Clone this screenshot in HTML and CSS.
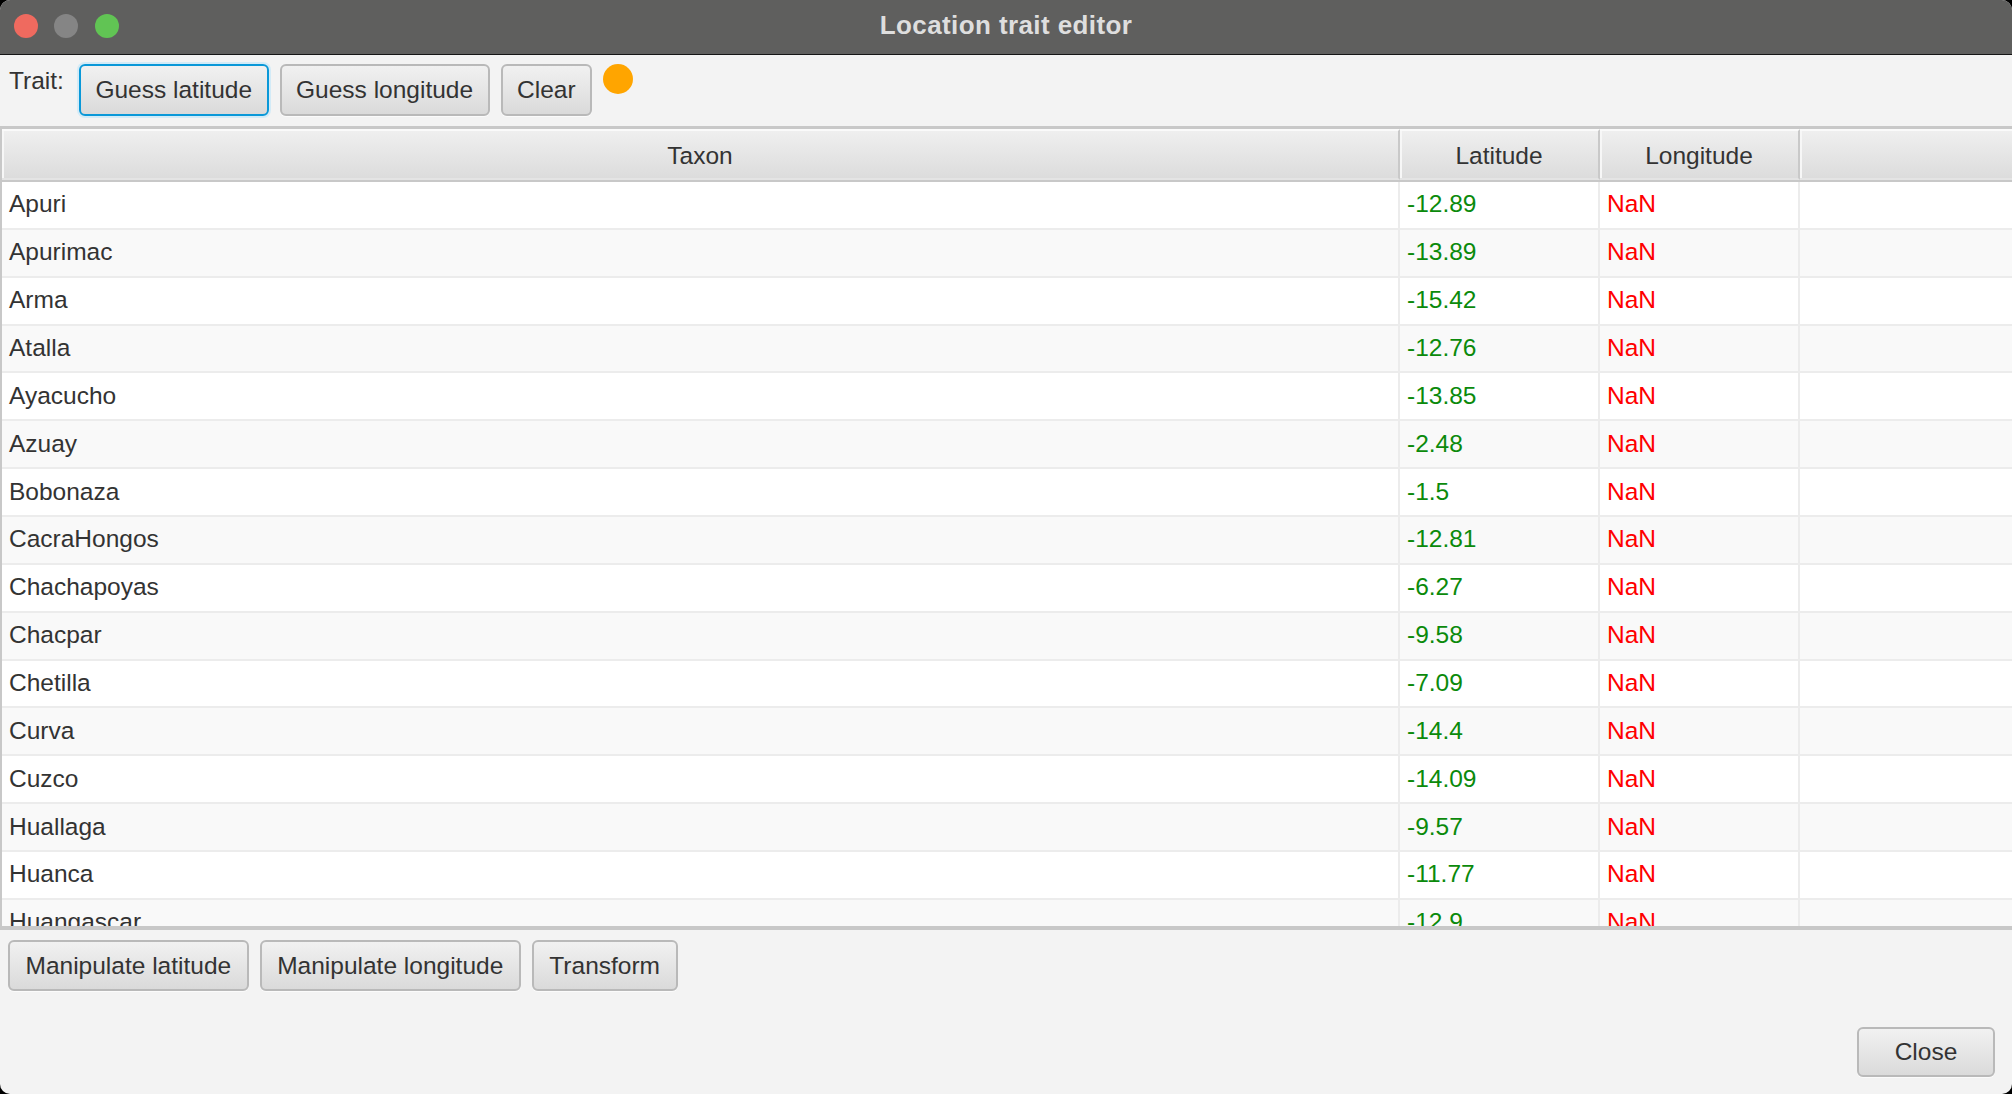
FILE: index.html
```html
<!DOCTYPE html>
<html lang="en">
<head>
<meta charset="utf-8">
<title>Location trait editor</title>
<link rel="stylesheet" href="styles.css">
</head>
<body>
<div class="window">
  <header class="titlebar">
    <div class="lights">
      <span class="light red"></span>
      <span class="light gray"></span>
      <span class="light green"></span>
    </div>
    <div class="title">Location trait editor</div>
    <div></div>
  </header>

  <div class="toolbar">
    <span class="label">Trait:</span>
    <button class="btn focused">Guess latitude</button>
    <button class="btn">Guess longitude</button>
    <button class="btn">Clear</button>
    <span class="status-dot"></span>
  </div>

  <div class="table">
    <div class="thead">
      <div class="th">Taxon</div>
      <div class="th">Latitude</div>
      <div class="th">Longitude</div>
      <div class="th filler"></div>
    </div>
    <div class="tbody">
      <div class="row"><div class="td">Apuri</div><div class="td lat">-12.89</div><div class="td lon">NaN</div><div class="td filler"></div></div>
      <div class="row"><div class="td">Apurimac</div><div class="td lat">-13.89</div><div class="td lon">NaN</div><div class="td filler"></div></div>
      <div class="row"><div class="td">Arma</div><div class="td lat">-15.42</div><div class="td lon">NaN</div><div class="td filler"></div></div>
      <div class="row"><div class="td">Atalla</div><div class="td lat">-12.76</div><div class="td lon">NaN</div><div class="td filler"></div></div>
      <div class="row"><div class="td">Ayacucho</div><div class="td lat">-13.85</div><div class="td lon">NaN</div><div class="td filler"></div></div>
      <div class="row"><div class="td">Azuay</div><div class="td lat">-2.48</div><div class="td lon">NaN</div><div class="td filler"></div></div>
      <div class="row"><div class="td">Bobonaza</div><div class="td lat">-1.5</div><div class="td lon">NaN</div><div class="td filler"></div></div>
      <div class="row"><div class="td">CacraHongos</div><div class="td lat">-12.81</div><div class="td lon">NaN</div><div class="td filler"></div></div>
      <div class="row"><div class="td">Chachapoyas</div><div class="td lat">-6.27</div><div class="td lon">NaN</div><div class="td filler"></div></div>
      <div class="row"><div class="td">Chacpar</div><div class="td lat">-9.58</div><div class="td lon">NaN</div><div class="td filler"></div></div>
      <div class="row"><div class="td">Chetilla</div><div class="td lat">-7.09</div><div class="td lon">NaN</div><div class="td filler"></div></div>
      <div class="row"><div class="td">Curva</div><div class="td lat">-14.4</div><div class="td lon">NaN</div><div class="td filler"></div></div>
      <div class="row"><div class="td">Cuzco</div><div class="td lat">-14.09</div><div class="td lon">NaN</div><div class="td filler"></div></div>
      <div class="row"><div class="td">Huallaga</div><div class="td lat">-9.57</div><div class="td lon">NaN</div><div class="td filler"></div></div>
      <div class="row"><div class="td">Huanca</div><div class="td lat">-11.77</div><div class="td lon">NaN</div><div class="td filler"></div></div>
      <div class="row"><div class="td">Huangascar</div><div class="td lat">-12.9</div><div class="td lon">NaN</div><div class="td filler"></div></div>
    </div>
  </div>

  <div class="footer">
    <div class="actions">
      <button class="btn small">Manipulate latitude</button>
      <button class="btn small">Manipulate longitude</button>
      <button class="btn small">Transform</button>
    </div>
    <div class="closebar">
      <button class="btn close">Close</button>
    </div>
  </div>
</div>
</body>
</html>
```

FILE: styles.css
```css
* { box-sizing: border-box; }

html, body {
  margin: 0;
  padding: 0;
  background: #000;
}

body {
  font-family: "Liberation Sans", Arial, sans-serif;
  font-size: 24.5px;
  color: #333;
}

.window {
  width: 2012px;
  height: 1094px;
  border-radius: 10px;
  overflow: hidden;
  background: #f3f3f3;
  display: flex;
  flex-direction: column;
}

/* Title bar */
.titlebar {
  height: 55px;
  flex: none;
  background: #5f5f5e;
  border-bottom: 1px solid #151515;
  display: grid;
  grid-template-columns: 1fr auto 1fr;
  align-items: center;
}

.lights {
  display: flex;
  gap: 16.5px;
  padding-left: 13.5px;
  padding-bottom: 2px;
}

.light {
  width: 24px;
  height: 24px;
  border-radius: 50%;
}
.light.red { background: #ef6a5f; }
.light.gray { background: #858585; }
.light.green { background: #61c454; }

.title {
  font-weight: bold;
  font-size: 26px;
  color: #dedede;
  letter-spacing: 0.4px;
  padding-bottom: 4px;
}

/* Toolbar */
.toolbar {
  flex: none;
  height: 71px;
  display: flex;
  align-items: flex-start;
  gap: 11px;
  padding: 9px 0 0 9px;
}

.label {
  margin-top: 3px;
  margin-right: 4px;
}

.btn {
  font-family: inherit;
  font-size: 24.5px;
  color: #333;
  height: 52px;
  padding: 0 14.5px;
  border: 2px solid #b9b9b9;
  border-radius: 6px;
  background: linear-gradient(#f1f1f1, #dadada);
  box-shadow: 0 1px 0 #fbfbfb;
  display: inline-flex;
  align-items: center;
  justify-content: center;
  white-space: nowrap;
}

.btn.focused {
  border-color: #0a98d8;
  box-shadow: 0 0 0 2px #d3ebf7;
}

.status-dot {
  width: 30px;
  height: 30px;
  border-radius: 50%;
  background: #ffa500;
}

/* Table */
.table {
  flex: none;
  height: 804px;
  display: flex;
  flex-direction: column;
  border-top: 3px solid #c8c8c8;
  border-left: 2px solid #c8c8c8;
  border-bottom: 4px solid #c8c8c8;
  background: #fff;
}

.thead, .row {
  display: grid;
  grid-template-columns: 1398px 200px 200px 1fr;
}

.thead {
  flex: none;
  height: 53px;
  border-bottom: 2px solid #c8c8c8;
}

.th {
  display: flex;
  align-items: center;
  justify-content: center;
  padding-top: 2px;
  background: linear-gradient(#efefef, #dcdcdc);
  border-top: 2px solid #fafafa;
  border-bottom: 2px solid #e4e4e4;
  border-right: 2px solid #c9c9c9;
  box-shadow: inset 2px 0 0 #f7f7f7;
}
.th.filler { border-right: none; }

.tbody {
  flex: 1;
  overflow: hidden;
}

.row {
  height: 47.86px;
  border-bottom: 2px solid #ececec;
  background: #fff;
}
.row:nth-child(even) { background: #f9f9f9; }

.td {
  display: flex;
  align-items: center;
  padding-left: 7px;
  padding-bottom: 1px;
  border-right: 2px solid #ececec;
  white-space: nowrap;
}
.td.filler { border-right: none; }
.td.lat { color: #0b8a0b; }
.td.lon { color: #ff0000; }

/* Footer */
.footer {
  flex: 1;
  display: flex;
  flex-direction: column;
  justify-content: space-between;
}

.actions {
  display: flex;
  gap: 11px;
  padding: 10px 0 0 8px;
}

.btn.small {
  height: 51px;
  padding: 0 15.5px;
}

.closebar {
  display: flex;
  justify-content: flex-end;
  padding: 0 17px 17px 0;
}

.btn.close {
  width: 138px;
  height: 50px;
}
```
